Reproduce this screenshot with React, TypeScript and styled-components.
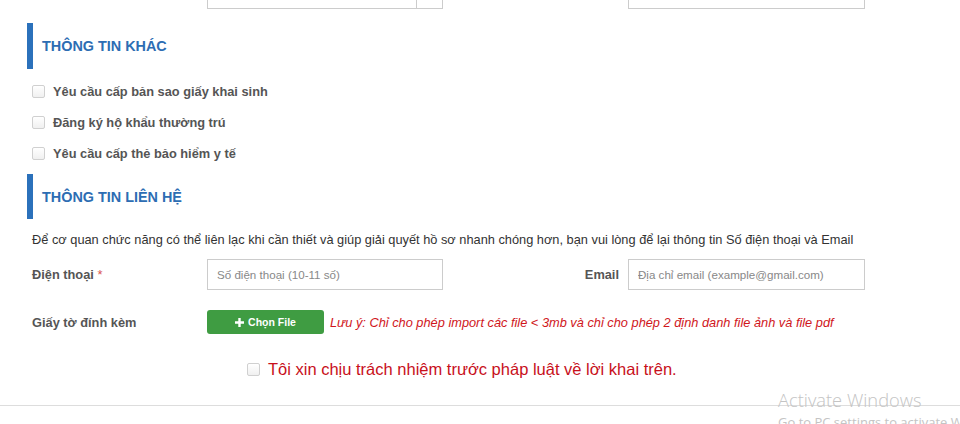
import React, { FC } from 'react';
import styled, { createGlobalStyle } from 'styled-components';

const GlobalStyle = createGlobalStyle`
  html, body {
    margin: 0;
    padding: 0;
    background: #fff;
    overflow: hidden;
  }
  body {
    font-family: 'Liberation Sans', Arial, sans-serif;
    color: #333;
  }
`;

const Page = styled.div`
  position: relative;
  width: 960px;
  height: 424px;
  overflow: hidden;
`;

const Container = styled.div`
  padding: 0 0 0 27px;
`;

const Content = styled.div`
  padding-left: 5px;
`;

const TopRow = styled.div`
  display: grid;
  grid-template-columns: 175px 236px 185px 237px;
  margin-top: -22px;
`;

const InputGroup = styled.div`
  display: flex;
`;

const Input = styled.input`
  box-sizing: border-box;
  width: 100%;
  height: 31px;
  border: 1px solid #ccc;
  padding: 0 9px;
  font-family: 'Liberation Sans', Arial, sans-serif;
  font-size: 11.6px;
  color: #333;
  outline: none;
  &::placeholder {
    color: #888;
  }
`;

const Addon = styled.span`
  box-sizing: border-box;
  width: 26px;
  flex: none;
  height: 31px;
  border: 1px solid #ccc;
  border-left: none;
`;

const SectionHeader = styled.h3<{ $top: number; $height: number }>`
  margin: ${({ $top }) => $top}px 0 0;
  height: ${({ $height }) => $height}px;
  border-left: 6px solid #2b71bb;
  padding-left: 9px;
  display: flex;
  align-items: center;
  font-size: 14.4px;
  font-weight: bold;
  color: #2d6db3;
`;

const CheckList = styled.div`
  display: flex;
  flex-direction: column;
  gap: 18px;
  margin-top: 16px;
`;

const CheckRow = styled.label`
  display: flex;
  align-items: center;
  gap: 8px;
  height: 13px;
  font-size: 12.8px;
  font-weight: bold;
  color: #555;
`;

const Box = styled.span`
  box-sizing: border-box;
  width: 13px;
  height: 13px;
  flex: none;
  border: 1px solid #d0d0d0;
  border-radius: 2px;
  background: linear-gradient(#fff, #f0f0f0);
`;

const Intro = styled.p`
  margin: 13px 0 0;
  font-size: 12.8px;
  line-height: 16px;
  color: #333;
  white-space: nowrap;
`;

const FormRow = styled.div<{ $top: number }>`
  display: grid;
  grid-template-columns: 175px 236px 185px 237px;
  align-items: center;
  margin-top: ${({ $top }) => $top}px;
`;

const Label = styled.span<{ $right?: boolean }>`
  font-size: 12.8px;
  font-weight: bold;
  color: #555;
  text-align: ${({ $right }) => ($right ? 'right' : 'left')};
  padding-right: ${({ $right }) => ($right ? '9px' : '0')};
`;

const Required = styled.span`
  color: #d9534f;
  font-weight: normal;
`;

const FileLine = styled.div`
  display: flex;
  align-items: center;
  gap: 6px;
  grid-column: 2 / span 3;
`;

const FileButton = styled.button`
  box-sizing: border-box;
  width: 117px;
  height: 24px;
  flex: none;
  border: none;
  border-radius: 3px;
  background: #3f9c42;
  color: #fff;
  font-family: 'Liberation Sans', Arial, sans-serif;
  font-size: 10.5px;
  font-weight: bold;
  display: flex;
  align-items: center;
  justify-content: center;
  gap: 4px;
  padding: 0;
`;

const Note = styled.span`
  font-size: 12.8px;
  font-style: italic;
  color: #d0161b;
  white-space: nowrap;
`;

const Agree = styled.label`
  display: flex;
  align-items: center;
  gap: 8px;
  margin: 29px 0 0 215px;
  height: 13px;
  font-size: 16.5px;
  color: #c8101b;
`;

const Divider = styled.hr`
  margin: 29px 0 0;
  border: none;
  border-top: 1px solid #ddd;
`;

const Watermark = styled.div`
  position: absolute;
  left: 778px;
  top: 388px;
  font-family: 'Open Sans', 'DejaVu Sans', sans-serif;
  color: #c4c4c4;
  white-space: nowrap;
  pointer-events: none;
`;

const WmTitle = styled.div`
  font-size: 18.3px;
  font-weight: 300;
  line-height: 24px;
`;

const WmSub = styled.div`
  font-size: 13px;
  line-height: 20px;
`;

const PlusIcon: FC = () => (
  <svg width="9" height="9" viewBox="0 0 9 9">
    <path d="M3.3 0h2.4v3.3H9v2.4H5.7V9H3.3V5.7H0V3.3h3.3z" fill="#fff" />
  </svg>
);

const otherItems = [
  'Yêu cầu cấp bản sao giấy khai sinh',
  'Đăng ký hộ khẩu thường trú',
  'Yêu cầu cấp thẻ bảo hiểm y tế',
];

const App: FC = () => (
  <Page>
    <GlobalStyle />
    <Container>
      <Content>
        <TopRow>
          <span />
          <InputGroup>
            <Input readOnly />
            <Addon />
          </InputGroup>
          <span />
          <Input readOnly />
        </TopRow>
      </Content>

      <SectionHeader $top={14} $height={46}>THÔNG TIN KHÁC</SectionHeader>
      <Content>
        <CheckList>
          {otherItems.map((item) => (
            <CheckRow key={item}>
              <Box />
              {item}
            </CheckRow>
          ))}
        </CheckList>
      </Content>

      <SectionHeader $top={14} $height={45}>THÔNG TIN LIÊN HỆ</SectionHeader>
      <Content>
        <Intro>
          Để cơ quan chức năng có thể liên lạc khi cần thiết và giúp giải quyết hồ sơ nhanh chóng hơn, bạn vui lòng để lại thông tin Số điện thoại và Email
        </Intro>
        <FormRow $top={11}>
          <Label>
            Điện thoại <Required>*</Required>
          </Label>
          <Input placeholder="Số điện thoại (10-11 số)" />
          <Label $right>Email</Label>
          <Input placeholder="Địa chỉ email (example@gmail.com)" />
        </FormRow>
        <FormRow $top={20}>
          <Label>Giấy tờ đính kèm</Label>
          <FileLine>
            <FileButton>
              <PlusIcon />
              Chọn File
            </FileButton>
            <Note>
              Lưu ý: Chỉ cho phép import các file &lt; 3mb và chỉ cho phép 2 định danh file ảnh và file pdf
            </Note>
          </FileLine>
        </FormRow>
        <Agree>
          <Box />
          Tôi xin chịu trách nhiệm trước pháp luật về lời khai trên.
        </Agree>
      </Content>
    </Container>
    <Divider />
    <Watermark>
      <WmTitle>Activate Windows</WmTitle>
      <WmSub>Go to PC settings to activate Windows.</WmSub>
    </Watermark>
  </Page>
);

export default App;
